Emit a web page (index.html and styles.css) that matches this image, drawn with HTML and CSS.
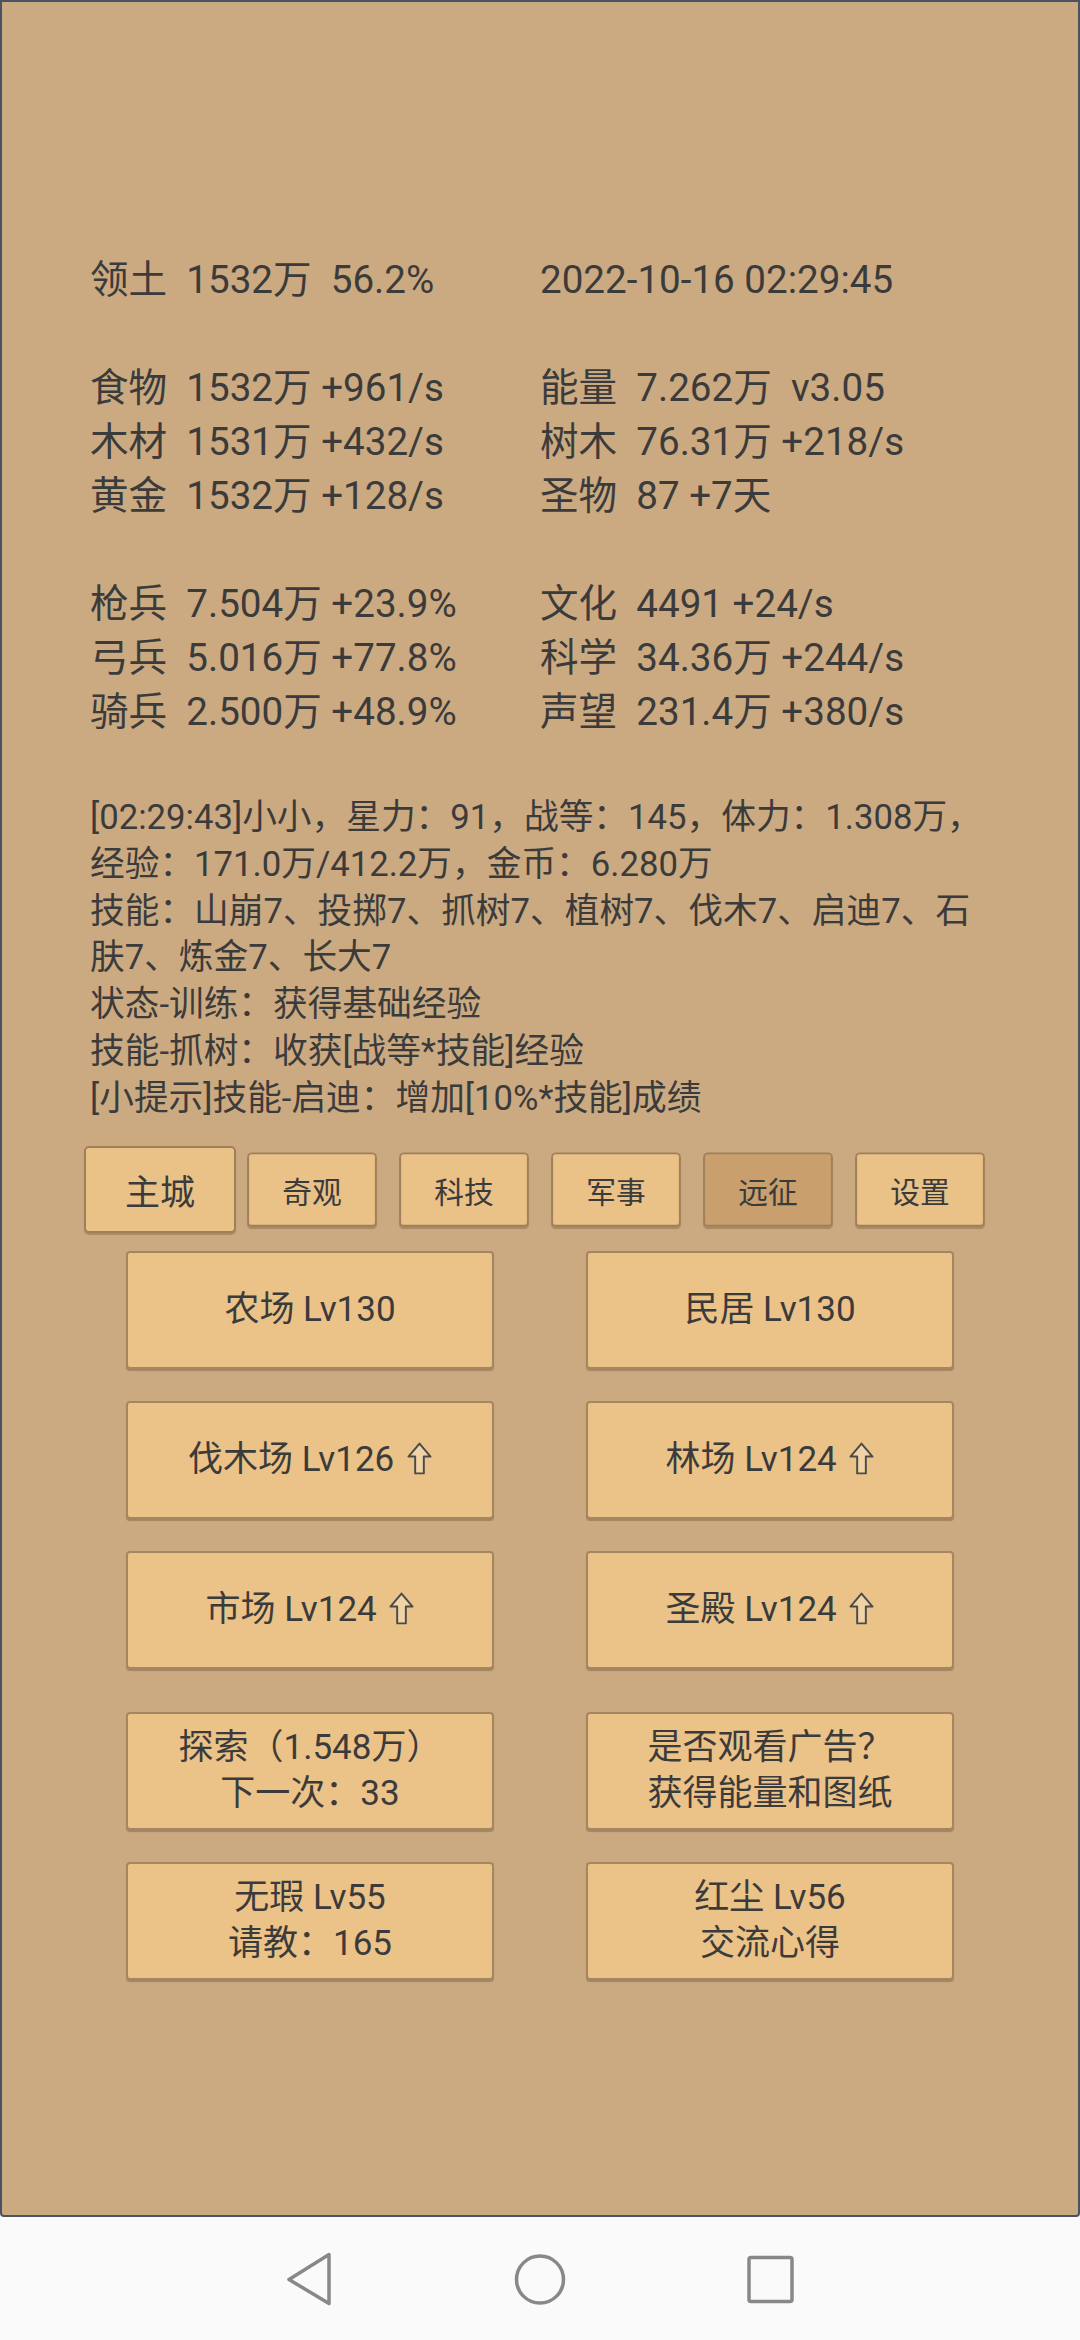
FILE: index.html
```html
<!DOCTYPE html>
<html lang="zh-CN">
<head>
<meta charset="UTF-8">
<meta name="viewport" content="width=device-width, initial-scale=1.0">
<title>主城</title>
<link rel="stylesheet" href="styles.css">
</head>
<body>

<div class="screen">

  <!-- 资源概览 -->
  <div class="stats">
    <div class="stat-group">
      <div class="stat">领土  1532万  56.2%</div>
      <div class="stat">2022-10-16 02:29:45</div>
    </div>
    <div class="stat-group">
      <div class="stat">食物  1532万 +961/s</div>
      <div class="stat">能量  7.262万  v3.05</div>
      <div class="stat">木材  1531万 +432/s</div>
      <div class="stat">树木  76.31万 +218/s</div>
      <div class="stat">黄金  1532万 +128/s</div>
      <div class="stat">圣物  87 +7天</div>
    </div>
    <div class="stat-group">
      <div class="stat">枪兵  7.504万 +23.9%</div>
      <div class="stat">文化  4491 +24/s</div>
      <div class="stat">弓兵  5.016万 +77.8%</div>
      <div class="stat">科学  34.36万 +244/s</div>
      <div class="stat">骑兵  2.500万 +48.9%</div>
      <div class="stat">声望  231.4万 +380/s</div>
    </div>
  </div>

  <!-- 日志 -->
  <div class="log">
    <p>[02:29:43]小小，星力：91，战等：145，体力：1.308万，经验：171.0万/412.2万，金币：6.280万</p>
    <p>技能：山崩7、投掷7、抓树7、植树7、伐木7、启迪7、石肤7、炼金7、长大7</p>
    <p>状态-训练：获得基础经验</p>
    <p>技能-抓树：收获[战等*技能]经验</p>
    <p>[小提示]技能-启迪：增加[10%*技能]成绩</p>
  </div>

  <!-- 页签 -->
  <div class="tabs">
    <div class="tab active">主城</div>
    <div class="tab">奇观</div>
    <div class="tab">科技</div>
    <div class="tab">军事</div>
    <div class="tab dim">远征</div>
    <div class="tab">设置</div>
  </div>

  <!-- 建筑 -->
  <div class="btn-grid">
    <div class="btn"><span>农场 Lv130</span></div>
    <div class="btn"><span>民居 Lv130</span></div>
    <div class="btn"><span>伐木场 Lv126 <svg class="up" viewBox="0 0 26 34"><path d="M13 1.5 L24.5 15 L17.5 15 L17.5 32.5 L8.5 32.5 L8.5 15 L1.5 15 Z"/></svg></span></div>
    <div class="btn"><span>林场 Lv124 <svg class="up" viewBox="0 0 26 34"><path d="M13 1.5 L24.5 15 L17.5 15 L17.5 32.5 L8.5 32.5 L8.5 15 L1.5 15 Z"/></svg></span></div>
    <div class="btn"><span>市场 Lv124 <svg class="up" viewBox="0 0 26 34"><path d="M13 1.5 L24.5 15 L17.5 15 L17.5 32.5 L8.5 32.5 L8.5 15 L1.5 15 Z"/></svg></span></div>
    <div class="btn"><span>圣殿 Lv124 <svg class="up" viewBox="0 0 26 34"><path d="M13 1.5 L24.5 15 L17.5 15 L17.5 32.5 L8.5 32.5 L8.5 15 L1.5 15 Z"/></svg></span></div>
  </div>

  <!-- 其他 -->
  <div class="btn-grid actions">
    <div class="btn"><span>探索（1.548万）<br>下一次：33</span></div>
    <div class="btn"><span>是否观看广告？<br>获得能量和图纸</span></div>
    <div class="btn"><span>无瑕 Lv55<br>请教：165</span></div>
    <div class="btn"><span>红尘 Lv56<br>交流心得</span></div>
  </div>

</div>

<!-- 系统导航栏 -->
<div class="navbar">
  <svg class="nav-icon" viewBox="0 0 60 60"><path d="M49 5.5 L9 30.5 L49 54.5 Z"/></svg>
  <svg class="nav-icon" viewBox="0 0 60 60"><circle cx="30" cy="30.5" r="23.5"/></svg>
  <svg class="nav-icon" viewBox="0 0 60 60"><rect x="9" y="8.5" width="43" height="44" rx="2"/></svg>
</div>

</body>
</html>
```

FILE: styles.css
```css
body {
  margin: 0;
  width: 1080px;
  background: #fafafa;
  color: #3b3b3b;
  font-family: Roboto, "Noto Sans CJK SC", sans-serif;
}

.screen {
  box-sizing: border-box;
  height: 2217px;
  padding-top: 251px;
  background: #cbaa81;
  border: 2px solid #4a5363;
  border-radius: 0 0 4px 4px;
}

/* 资源概览 */
.stats {
  padding-left: 88px;
  font-size: 38.6px;
  line-height: 54px;
}

.stat-group {
  display: grid;
  grid-template-columns: 450px 1fr;
  margin-bottom: 54px;
}

.stat-group:last-child {
  margin-bottom: 0;
}

.stat {
  white-space: pre;
}

/* 日志 */
.log {
  width: 903px;
  margin-top: 55px;
  padding-left: 88px;
  font-size: 34.7px;
  line-height: 46.8px;
}

.log p {
  margin: 0;
}

/* 页签 */
.tabs {
  display: grid;
  grid-template-columns: repeat(6, 152px);
  height: 87px;
  justify-content: center;
  margin-top: 24px;
}

.tab {
  box-sizing: border-box;
  display: flex;
  align-items: center;
  justify-content: center;
  background: #eac187;
  border: 2px solid #a0805a;
  border-radius: 5px;
  box-shadow: 0 2px 1px rgba(90,65,35,0.3);
  font-size: 35px;
  transform: scale(0.85);
}

.tab.active {
  transform: none;
}

.tab.dim {
  background: #c99f6d;
}

/* 按钮 */
.btn-grid {
  display: grid;
  grid-template-columns: 368px 368px;
  grid-auto-rows: 118px;
  column-gap: 92px;
  row-gap: 32px;
  justify-content: center;
  margin-top: 18px;
}

.btn-grid.actions {
  margin-top: 43px;
}

.btn {
  box-sizing: border-box;
  display: flex;
  align-items: center;
  justify-content: center;
  text-align: center;
  background: #ebc287;
  border: 2px solid #a58661;
  border-radius: 4px;
  box-shadow: 0 2px 1px rgba(90,65,35,0.35);
  font-size: 35px;
  line-height: 46px;
}

.btn .up {
  width: 25px;
  height: 33px;
  margin-left: 4px;
  vertical-align: -4px;
}

.up path {
  fill: #f0d3a6;
  stroke: #4a4a4a;
  stroke-width: 2;
  stroke-linejoin: round;
}

/* 系统导航栏 */
.navbar {
  height: 123px;
  display: flex;
  align-items: center;
  justify-content: center;
  gap: 170px;
}

.nav-icon {
  width: 60px;
  height: 60px;
}

.nav-icon path,
.nav-icon circle,
.nav-icon rect {
  fill: none;
  stroke: #888;
  stroke-width: 3.5;
  stroke-linejoin: round;
}
```
